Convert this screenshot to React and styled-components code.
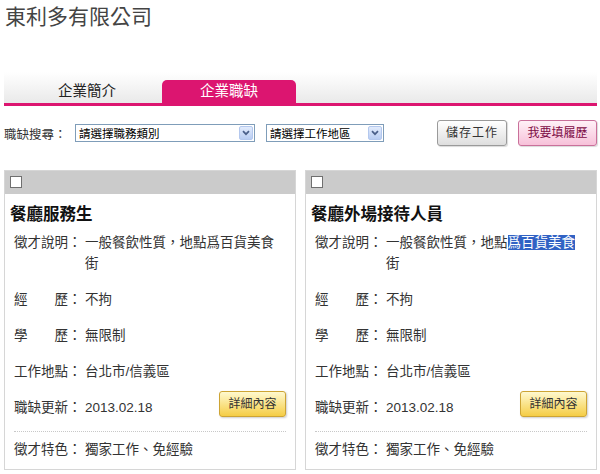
import React from 'react'
import styled, { createGlobalStyle } from 'styled-components'

const GlobalStyle = createGlobalStyle`
  body {
    margin: 0;
    background: #fff;
    font-family: "Liberation Sans", "Noto Sans CJK TC", sans-serif;
    color: #333;
  }
`

const Page = styled.div`
  width: 593px;
  padding: 2px 3px 0 4px;
`

const CompanyName = styled.h1`
  margin: 0;
  padding-left: 1px;
  font-size: 21px;
  line-height: 30px;
  font-weight: normal;
  color: #444;
`

const TabBar = styled.div`
  display: flex;
  align-items: flex-end;
  gap: 8px;
  height: 31px;
  margin-top: 40px;
  padding-left: 16px;
  background: linear-gradient(#ffffff, #e9e9e9);
  border-bottom: 3px solid #dc1570;
`

const Tab = styled.div`
  width: 134px;
  height: 23px;
  line-height: 23px;
  text-align: center;
  font-size: 14.5px;
  border-radius: 5px 5px 0 0;
  color: ${p => (p.$active ? '#fff' : '#222')};
  background: ${p => (p.$active ? '#dc1570' : 'transparent')};
`

const FilterRow = styled.div`
  display: flex;
  align-items: center;
  height: 26px;
  margin-top: 14px;
`

const FilterLabel = styled.span`
  width: 71px;
  font-size: 12.5px;
  color: #333;
`

const Select = styled.div`
  display: flex;
  align-items: center;
  justify-content: space-between;
  box-sizing: border-box;
  width: ${p => p.$width}px;
  height: 18px;
  margin-right: 11px;
  padding: 0 1px 0 3px;
  border: 1px solid #7f9db9;
  background: #fff;
  font-size: 11.5px;
  color: #000;
`

const Arrow = styled.span`
  display: flex;
  align-items: center;
  justify-content: center;
  box-sizing: border-box;
  width: 14px;
  height: 14px;
  border: 1px solid #b4c8ee;
  border-radius: 2px;
  background: linear-gradient(#e2ebfc, #b9cdf3);
`

const Actions = styled.div`
  display: flex;
  gap: 11px;
  margin-left: auto;
`

const ActionButton = styled.div`
  box-sizing: border-box;
  height: 26px;
  line-height: 24px;
  width: ${p => (p.$primary ? 79 : 70)}px;
  text-align: center;
  white-space: nowrap;
  font-size: 12px;
  letter-spacing: ${p => (p.$primary ? 0 : 1)}px;
  border-radius: 3px;
  border: 1px solid ${p => (p.$primary ? '#c9709a' : '#9a9a9a')};
  color: ${p => (p.$primary ? '#7d0c45' : '#333')};
  background: ${p =>
    p.$primary
      ? 'linear-gradient(#fff1f7, #f7c1d9)'
      : 'linear-gradient(#ffffff, #dedede)'};
  box-shadow: 1px 1px 1px rgba(0, 0, 0, 0.15);
`

const Cards = styled.div`
  display: flex;
  gap: 9px;
  margin-top: 24px;
`

const Card = styled.div`
  box-sizing: border-box;
  width: 292px;
  height: 300px;
  border: 1px solid #d6d6d6;
  background: #fff;
`

const CardHead = styled.div`
  height: 23px;
  padding: 5px 0 0 5px;
  box-sizing: border-box;
  background: #cbcbcb;
`

const Check = styled.span`
  display: block;
  box-sizing: border-box;
  width: 12px;
  height: 12px;
  border: 1px solid #6f6f6f;
  background: #fff;
`

const JobTitle = styled.h2`
  margin: 8px 0 0;
  padding-left: 5px;
  font-size: 16.5px;
  line-height: 24px;
  font-weight: bold;
  color: #111;
`

const Rows = styled.div`
  display: flex;
  flex-direction: column;
  gap: 15px;
  margin-top: 6px;
  padding: 0 9px;
`

const Row = styled.div`
  display: flex;
  align-items: flex-start;
  font-size: 13.5px;
  line-height: 21px;
`

const Label = styled.span`
  flex: none;
  width: 71px;
  color: #333;
`

const Value = styled.span`
  flex: 1;
  color: #333;
`

const Picked = styled.span`
  background: #3162c4;
  color: #fff;
`

const DetailButton = styled.div`
  box-sizing: border-box;
  width: 67px;
  height: 26px;
  margin: -6px 0 -1px;
  line-height: 24px;
  text-align: center;
  white-space: nowrap;
  font-size: 12px;
  color: #333;
  border: 1px solid #cda434;
  border-radius: 3px;
  background: linear-gradient(#fff9cf, #f5cd45);
  box-shadow: 1px 1px 2px rgba(0, 0, 0, 0.2);
`

const Divider = styled.div`
  margin: 13px 9px 0;
  border-top: 1px dotted #c8c8c8;
`

const Feature = styled(Row)`
  margin-top: 7px;
  padding: 0 9px;
`

const jobs = [
  { title: '餐廳服務生', picked: false },
  { title: '餐廳外場接待人員', picked: true },
]

function ChevronDown() {
  return (
    <svg width="8" height="6" viewBox="0 0 8 6">
      <path d="M1 1.2 L4 4.2 L7 1.2" fill="none" stroke="#4a5f8a" strokeWidth="1.7" />
    </svg>
  )
}

function JobCard({ title, picked }) {
  return (
    <Card>
      <CardHead>
        <Check />
      </CardHead>
      <JobTitle>{title}</JobTitle>
      <Rows>
        <Row>
          <Label>徵才說明：</Label>
          <Value>
            一般餐飲性質，地點{picked ? <Picked>爲百貨美食</Picked> : '爲百貨美食'}街
          </Value>
        </Row>
        <Row>
          <Label>經　　歷：</Label>
          <Value>不拘</Value>
        </Row>
        <Row>
          <Label>學　　歷：</Label>
          <Value>無限制</Value>
        </Row>
        <Row>
          <Label>工作地點：</Label>
          <Value>台北市/信義區</Value>
        </Row>
        <Row>
          <Label>職缺更新：</Label>
          <Value>2013.02.18</Value>
          <DetailButton>詳細內容</DetailButton>
        </Row>
      </Rows>
      <Divider />
      <Feature>
        <Label>徵才特色：</Label>
        <Value>獨家工作、免經驗</Value>
      </Feature>
    </Card>
  )
}

export default function App() {
  return (
    <Page>
      <GlobalStyle />
      <CompanyName>東利多有限公司</CompanyName>
      <TabBar>
        <Tab>企業簡介</Tab>
        <Tab $active>企業職缺</Tab>
      </TabBar>
      <FilterRow>
        <FilterLabel>職缺搜尋：</FilterLabel>
        <Select $width={180}>
          <span>請選擇職務類別</span>
          <Arrow><ChevronDown /></Arrow>
        </Select>
        <Select $width={118}>
          <span>請選擇工作地區</span>
          <Arrow><ChevronDown /></Arrow>
        </Select>
        <Actions>
          <ActionButton>儲存工作</ActionButton>
          <ActionButton $primary>我要填履歷</ActionButton>
        </Actions>
      </FilterRow>
      <Cards>
        {jobs.map(job => (
          <JobCard key={job.title} {...job} />
        ))}
      </Cards>
    </Page>
  )
}
